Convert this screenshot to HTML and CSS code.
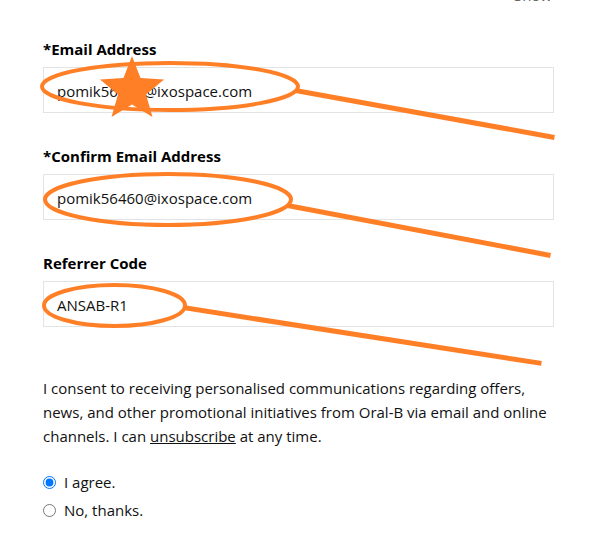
FILE: index.html
```html
<!DOCTYPE html>
<html lang="en">
<head>
<meta charset="utf-8">
<title>Sign up form</title>
<link rel="stylesheet" href="styles.css">
</head>
<body>
<div class="page">
  <div class="show-row"><span class="show">Show</span></div>
  <form class="form">
    <div class="field">
      <label class="label" for="email">*Email Address</label>
      <div class="input" id="email">pomik56460@ixospace.com</div>
    </div>
    <div class="field">
      <label class="label" for="email2">*Confirm Email Address</label>
      <div class="input" id="email2">pomik56460@ixospace.com</div>
    </div>
    <div class="field">
      <label class="label" for="ref">Referrer Code</label>
      <div class="input" id="ref">ANSAB-R1</div>
    </div>
    <p class="consent">I consent to receiving personalised communications regarding offers, news, and other promotional initiatives from Oral-B via email and online channels. I can <a class="link" href="#">unsubscribe</a> at any time.</p>
    <div class="radios">
      <label class="radio"><input type="radio" name="agree" checked><span>I agree.</span></label>
      <label class="radio"><input type="radio" name="agree"><span>No, thanks.</span></label>
    </div>
  </form>
  <svg class="marks" width="606" height="547" viewBox="0 0 606 547" aria-hidden="true">
    <g fill="none" stroke="#ff7f27" stroke-width="4">
      <ellipse cx="170" cy="86.5" rx="128" ry="23.5"/>
      <ellipse cx="168" cy="199.5" rx="123" ry="25.5"/>
      <ellipse cx="114.5" cy="305.5" rx="70.5" ry="20.5"/>
    </g>
    <g stroke="#ff7f27" stroke-width="5" stroke-linecap="square">
      <line x1="298" y1="91" x2="552" y2="137"/>
      <line x1="290" y1="206" x2="548" y2="255"/>
      <line x1="186" y1="308" x2="539" y2="363"/>
    </g>
    <polygon fill="#ff7f27" points="132,56 140.5,78 164,79.5 146,94.5 152.5,117 132,104.5 111.5,117 118,94.5 100,79.5 123.5,78"/>
  </svg>
</div>
</body>
</html>
```
FILE: styles.css
```css
html, body {
  margin: 0;
  padding: 0;
  background: #ffffff;
}

body {
  font-family: "Open Sans", "Noto Sans", sans-serif;
  font-size: 15px;
  color: #111111;
}

.page {
  position: relative;
  width: 606px;
  height: 547px;
  overflow: hidden;
}

.show-row {
  margin-top: -15px;
  height: 20px;
  line-height: 20px;
  padding-right: 54px;
  text-align: right;
  color: #666666;
}

.form {
  display: flex;
  flex-direction: column;
  width: 511px;
  margin: 34px 0 0 43px;
}

.field {
  display: flex;
  flex-direction: column;
  gap: 8px;
  margin-bottom: 33px;
}

.label {
  display: block;
  font-weight: 700;
  line-height: 20px;
  color: #000000;
}

.input {
  box-sizing: border-box;
  height: 46px;
  border: 1px solid #e3e3e3;
  padding: 0 13px;
  display: flex;
  align-items: center;
  line-height: 20px;
  color: #111111;
  padding-top: 2px;
}

.consent {
  margin: 16px 0 0 0;
  line-height: 24px;
  color: #111111;
}

.link {
  color: #111111;
  text-decoration: underline;
}

.radios {
  display: flex;
  flex-direction: column;
  gap: 4px;
  margin-top: 22px;
}

.radio {
  display: flex;
  align-items: center;
  line-height: 24px;
  gap: 8px;
}

.radio input {
  margin: 0;
  width: 13px;
  height: 13px;
}

.marks {
  position: absolute;
  left: 0;
  top: 0;
  pointer-events: none;
}
```
